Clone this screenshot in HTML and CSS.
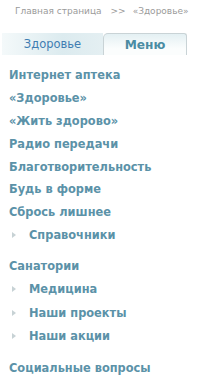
FILE: index.html
```html
<!DOCTYPE html>
<html>
<head>
<meta charset="utf-8">
<link rel="stylesheet" href="styles.css">
</head>
<body>
<div class="page">
  <div class="crumbs"><span>Главная страница</span><span class="sep">&gt;&gt;</span><span>«Здоровье»</span></div>
  <div class="tabs">
    <div class="tab tab-a">Здоровье</div>
    <div class="tab tab-b">Меню</div>
  </div>
  <ul class="menu">
    <li class="item">Интернет аптека</li>
    <li class="item">«Здоровье»</li>
    <li class="item">«Жить здорово»</li>
    <li class="item">Радио передачи</li>
    <li class="item">Благотворительность</li>
    <li class="item">Будь в форме</li>
    <li class="item">Сбрось лишнее</li>
    <li class="item sub">Справочники</li>
    <li class="item gap">Санатории</li>
    <li class="item sub">Медицина</li>
    <li class="item sub">Наши проекты</li>
    <li class="item sub">Наши акции</li>
    <li class="item gap">Социальные вопросы</li>
  </ul>
</div>
</body>
</html>
```
FILE: styles.css
```css
html, body { margin: 0; padding: 0; background: #fff; }
.page { width: 213px; font-family: "DejaVu Sans", Verdana, sans-serif; }
.crumbs {
  display: flex; gap: 8px;
  padding: 6px 0 0 15px;
  height: 12px;
  font-size: 9px; color: #9a9a9a; line-height: 10px;
  white-space: nowrap;
}
.crumbs .sep { margin-left: 1px; margin-right: -1px; }
.tabs { display: flex; margin: 15px 0 0 2px; width: 185px; height: 22px; }
.tab { display: flex; align-items: center; justify-content: center; }
.tab-a {
  width: 101px;
  background: linear-gradient(to right, #f4f9fa, #dcebef 60%, #e4eff2);
  color: #3f7db2; font-size: 11.5px;
}
.tab-b {
  flex: 1;
  border: 1px solid #c9d3d6; border-bottom: none;
  border-radius: 5px 3px 0 0;
  background: linear-gradient(to bottom, #e4f0f3, #fbfdfd 70%);
  color: #4b8ca3; font-weight: bold; font-size: 12.2px;
}
.menu { list-style: none; margin: 10px 0 0 0; padding: 0; }
.item {
  height: 22.9px; line-height: 20px;
  padding-left: 9px;
  font-size: 11.4px; font-weight: bold; color: #5b92a8;
  white-space: nowrap;
}
.item.sub { padding-left: 29px; position: relative; height: 23.6px; }
.item.sub::before {
  content: ""; position: absolute; left: 12px; top: 7px;
  border-left: 4px solid #c7d2d5; border-top: 3.5px solid transparent; border-bottom: 3.5px solid transparent;
}
.item.gap { margin-top: 7.5px; }
```
